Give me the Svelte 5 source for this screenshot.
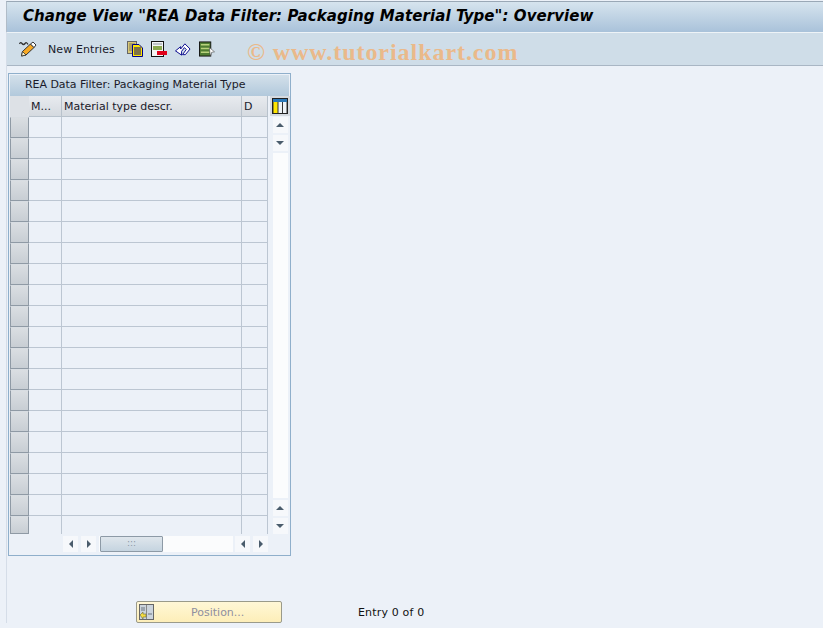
<script>
    const rows = Array.from({ length: 20 }, (_, i) => i);
</script>

<div class="screen">
    <header class="title-bar">
        <h1>Change View "REA Data Filter: Packaging Material Type": Overview</h1>
    </header>

    <div class="main">
        <div class="toolbar">
            <button class="tool first" aria-label="Edit">
                <svg width="18" height="16" viewBox="0 0 18 16">
                    <path d="M0.5 3 Q1.5 0.5 3 2.5 T6 2.5 T9 3.5" fill="none" stroke="#333" stroke-width="1.3" />
                    <path d="M2.5 15 L3.5 10.5 L11.5 3 L15 6.5 L7 14 Z" fill="#f7a823" stroke="#333" />
                    <path d="M2.5 15 L3.5 10.5 L7 14 Z" fill="#fff3c8" stroke="#333" stroke-width="0.8" />
                    <path d="M11.5 3 L14 1 L17 4 L15 6.5 Z" fill="#fff" stroke="#333" />
                </svg>
            </button>
            <span class="tool-text">New Entries</span>
            <button class="tool" aria-label="Copy">
                <svg width="16" height="16" viewBox="0 0 16 16">
                    <rect x="0.5" y="0.5" width="9" height="12" fill="#d8c878" stroke="#666" />
                    <path d="M2 3 H8 M2 5 H5 M2 7 H5 M2 9 H5" stroke="#807850" />
                    <path d="M5.5 3.5 H12 L15.5 7 V15.5 H5.5 Z" fill="#ffe600" stroke="#00008a" />
                    <path d="M7 7 H14 M7 9 H14 M7 11 H14 M7 13 H14" stroke="#00008a" />
                </svg>
            </button>
            <button class="tool" aria-label="Delete">
                <svg width="16" height="16" viewBox="0 0 16 16">
                    <rect x="0.5" y="0.5" width="12" height="15" fill="#f4f4f4" stroke="#111" />
                    <path d="M2 3 H11" stroke="#8a949c" />
                    <rect x="2" y="5" width="9" height="4" fill="#8aa84e" />
                    <rect x="6" y="10" width="10" height="4" fill="#e0001a" />
                </svg>
            </button>
            <button class="tool" aria-label="Undo">
                <svg width="17" height="16" viewBox="0 0 17 16">
                    <path d="M0.5 10 L6 5.5 V8 L10.5 2.5 L16 8 L11 14 H8 L12 8.5 L10 6.5 L7 10.5 V14.5 Z" fill="#fff" stroke="#00008a" />
                </svg>
            </button>
            <button class="tool" aria-label="Select">
                <svg width="17" height="16" viewBox="0 0 17 16">
                    <rect x="0.5" y="0.5" width="12" height="15" fill="#4f7d32" stroke="#111" />
                    <path d="M2 3.5 H11 M2 7.5 H11 M2 11.5 H11" stroke="#b8d27c" stroke-width="1.5" />
                    <path d="M11 6.5 L16.5 11 L13.5 11.5 L12 15.5 Z" fill="#fff" stroke="#444" stroke-width="0.6" />
                </svg>
            </button>
            <span class="watermark">© www.tutorialkart.com</span>
        </div>

        <div class="content">
            <section class="table-box">
                <div class="table-title">REA Data Filter: Packaging Material Type</div>
                <div class="table-body">
                    <div class="grid">
                        <div class="row head">
                            <div class="sel"></div>
                            <div class="cell c1">M...</div>
                            <div class="cell c2">Material type descr.</div>
                            <div class="cell c3">D</div>
                        </div>
                        {#each rows as r (r)}
                            <div class="row" class:last={r === rows.length - 1}>
                                <div class="sel"></div>
                                <div class="cell c1"></div>
                                <div class="cell c2"></div>
                                <div class="cell c3"></div>
                            </div>
                        {/each}
                    </div>
                    <div class="vscroll">
                        <button class="config" aria-label="Table settings">
                            <svg width="16" height="16" viewBox="0 0 16 16">
                                <rect x="0.5" y="0.5" width="15" height="15" fill="#333" stroke="#222" />
                                <rect x="1" y="1" width="14" height="3" fill="#2b78b8" />
                                <rect x="1.5" y="4" width="4" height="11" fill="#ffe600" />
                                <rect x="6.5" y="4" width="3.5" height="11" fill="#eef2f6" />
                                <rect x="11" y="4" width="3.5" height="11" fill="#eef2f6" />
                            </svg>
                        </button>
                        <button class="step" aria-label="Up"><span class="arrow up"></span></button>
                        <button class="step" aria-label="Down"><span class="arrow down"></span></button>
                        <div class="track"></div>
                        <button class="step" aria-label="Page up"><span class="arrow up"></span></button>
                        <button class="step" aria-label="Page down"><span class="arrow down"></span></button>
                    </div>
                </div>
                <div class="hscroll">
                    <button class="step" aria-label="Left"><span class="arrow left"></span></button>
                    <button class="step" aria-label="Right"><span class="arrow right"></span></button>
                    <div class="hbar">
                        <div class="thumb">:::</div>
                    </div>
                    <button class="step" aria-label="Page left"><span class="arrow left"></span></button>
                    <button class="step" aria-label="Page right"><span class="arrow right"></span></button>
                </div>
            </section>

            <div class="footer">
                <button class="position">
                    <svg width="15" height="16" viewBox="0 0 15 16">
                        <rect x="0.5" y="0.5" width="14" height="15" fill="#ccd4dc" stroke="#666" />
                        <path d="M7.5 1 V15" stroke="#888" />
                        <path d="M2 4 H6 M2 6 H6 M9 10 H13" stroke="#6a7480" />
                        <path d="M1 11 L4 8 V10 H7 V13 H4 V15 Z" fill="#f4dc40" stroke="#6a6a3a" stroke-width="0.6" />
                    </svg>
                    <span>Position...</span>
                </button>
                <span class="entry">Entry 0 of 0</span>
            </div>
        </div>
    </div>
</div>

<style>
    :global(body) {
        margin: 0;
        background: #ecf1f8;
    }

    .screen {
        width: 823px;
        height: 628px;
        overflow: hidden;
        background: #ecf1f8;
        font-family: "DejaVu Sans", sans-serif;
        font-size: 11px;
        color: #1a1a2a;
        padding-top: 1px;
        box-sizing: border-box;
    }

    .title-bar {
        height: 30px;
        margin-left: 6px;
        border-top: 1px solid #9aa8b6;
        border-left: 1px solid #b0bcc8;
        background: linear-gradient(#d6e4ee, #a9c2da);
        display: flex;
        align-items: center;
    }

    h1 {
        margin: 0 0 2px 16px;
        font-size: 15px;
        font-weight: bold;
        font-style: italic;
        color: #000;
        white-space: nowrap;
        letter-spacing: 0.07px;
    }

    .main {
        margin-left: 6px;
        border-left: 1px solid #d5dde8;
    }

    .toolbar {
        height: 32px;
        border-top: 1px solid #eef3f7;
        border-bottom: 1px solid #a9b6c4;
        background: #cfdde8;
        display: flex;
        align-items: center;
    }

    .tool {
        border: none;
        background: none;
        padding: 0;
        width: 16px;
        height: 16px;
        margin-right: 8px;
        display: flex;
    }

    .tool.first {
        width: 18px;
        margin-left: 12px;
        margin-right: 11px;
    }

    .tool-text {
        font-size: 11px;
        margin-right: 12px;
        letter-spacing: 0.1px;
    }

    .watermark {
        margin: 6px 0 0 24px;
        font-family: "Liberation Serif", serif;
        font-size: 24px;
        font-weight: bold;
        letter-spacing: 0.95px;
        color: #eab98a;
        white-space: nowrap;
    }

    .content {
        padding: 7px 0 0 1px;
    }

    .table-box {
        width: 281px;
        height: 481px;
        border: 1px solid #8fafcb;
    }

    .table-title {
        height: 21px;
        margin: 1px 1px 0;
        padding-left: 15px;
        line-height: 19px;
        font-size: 11px;
        letter-spacing: -0.05px;
        background: linear-gradient(#d3e0ea, #b2c9dc);
    }

    .table-body {
        display: flex;
        padding-left: 1px;
    }

    .grid {
        width: 259px;
    }

    .row {
        display: flex;
        height: 21px;
    }

    .row.last {
        height: 18px;
    }

    .row.last .cell {
        border-bottom: none;
    }

    .sel {
        width: 19px;
        box-sizing: border-box;
        background: linear-gradient(#dadee2, #c8ced4);
        border: 1px solid #8f9aa5;
        border-top-color: #d8dde2;
    }

    .cell {
        box-sizing: border-box;
        border-right: 1px solid #bcc6d2;
        border-bottom: 1px solid #bcc6d2;
        line-height: 21px;
        padding-left: 2px;
        font-size: 11px;
        white-space: nowrap;
    }

    .c1 {
        width: 33px;
    }

    .c2 {
        width: 180px;
    }

    .c3 {
        width: 26px;
    }

    .head .sel {
        background: #dde1e6;
        border: none;
    }

    .head .cell {
        background: linear-gradient(#e8ebef, #d5dae0);
        border-right-color: #b8c2cc;
        border-bottom-color: #b8c2cc;
    }

    .vscroll {
        width: 20px;
        margin-left: 2px;
        display: flex;
        flex-direction: column;
        align-items: center;
    }

    .config {
        width: 20px;
        height: 20px;
        padding: 2px;
        border: none;
        background: #d5dae0;
        margin-bottom: 1px;
        display: flex;
    }

    .step {
        width: 15px;
        height: 16px;
        padding: 0;
        border: none;
        background: #f6f8fb;
        display: flex;
        align-items: center;
        justify-content: center;
        margin-bottom: 2px;
        flex: none;
    }

    .track {
        width: 15px;
        flex: 1;
        background: #fbfcfd;
        margin-bottom: 2px;
    }

    .vscroll .step:last-child {
        margin-bottom: 0;
    }

    .arrow {
        width: 0;
        height: 0;
        display: block;
    }

    .arrow.up {
        border: 4px solid transparent;
        border-top: none;
        border-bottom: 4px solid #4a5c6c;
    }

    .arrow.down {
        border: 4px solid transparent;
        border-bottom: none;
        border-top: 4px solid #4a5c6c;
    }

    .arrow.left {
        border: 4px solid transparent;
        border-left: none;
        border-right: 4px solid #4a5c6c;
    }

    .arrow.right {
        border: 4px solid transparent;
        border-right: none;
        border-left: 4px solid #4a5c6c;
    }

    .hscroll {
        display: flex;
        height: 16px;
        margin-top: 2px;
        padding-left: 54px;
    }

    .hscroll .step {
        margin-right: 3px;
        margin-bottom: 0;
    }

    .hbar {
        width: 133px;
        padding-left: 1px;
        margin-right: 2px;
        background: #fbfcfd;
    }

    .thumb {
        width: 63px;
        height: 16px;
        box-sizing: border-box;
        border: 1px solid #8d9aa6;
        border-radius: 1px;
        background: linear-gradient(#dfe6ec, #c5d4e0);
        text-align: center;
        font-size: 9px;
        line-height: 13px;
        color: #8a97a3;
    }

    .footer {
        display: flex;
        align-items: center;
        margin-top: 45px;
        padding-left: 128px;
    }

    .position {
        width: 146px;
        height: 22px;
        box-sizing: border-box;
        padding: 0 0 0 2px;
        border: 1px solid #9a9a8a;
        border-radius: 2px;
        background: linear-gradient(#fff7d6, #fdeeb8);
        display: flex;
        align-items: center;
        font-family: inherit;
        font-size: 11px;
        color: #8f8f9f;
    }

    .position span {
        margin-left: 37px;
    }

    .entry {
        margin-left: 76px;
        font-size: 11px;
        letter-spacing: 0.17px;
        color: #111;
    }
</style>
